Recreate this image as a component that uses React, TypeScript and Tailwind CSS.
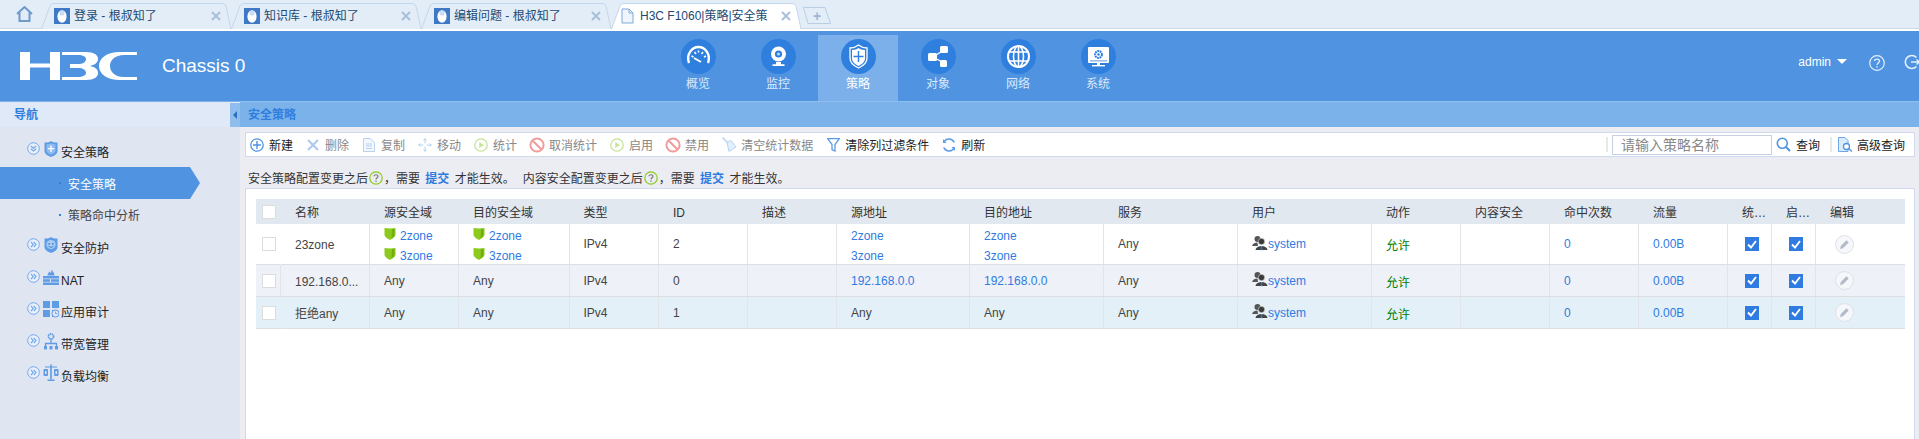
import React from 'react';

const FONT = "font-['Liberation_Sans','Noto_Sans_CJK_SC',sans-serif]";

const Egg = () => (
  <svg width="16" height="16" viewBox="0 0 16 16" className="shrink-0 relative">
    <rect width="16" height="16" fill="#3f78c4" />
    <ellipse cx="8" cy="8.5" rx="4.6" ry="6.2" fill="#ffffff" />
    <ellipse cx="8" cy="5" rx="2.6" ry="2.6" fill="#c9dcf3" />
  </svg>
);

const TabShape = ({ active }: { active?: boolean }) => (
  <svg className="absolute inset-0 w-full h-full" viewBox="0 0 190 26" preserveAspectRatio="none">
    <path
      d="M0.5 26 L9 3 Q10 0.5 13 0.5 H181 Q184 0.5 185 3 L190 26"
      fill={active ? '#ffffff' : '#e3edf8'}
      stroke="#c4d6ea"
      strokeWidth="1"
    />
  </svg>
);

const Tab = ({ title, active }: { title: string; active?: boolean }) => (
  <div className="relative w-[190px] h-[26px] flex items-center pl-[13px] pr-[10px] shrink-0">
    <TabShape active={active} />
    {active ? (
      <svg width="13" height="16" viewBox="0 0 13 16" className="shrink-0 relative -ml-[3px]">
        <path d="M1 1H8L12 5V15H1Z" fill="#eef5fc" stroke="#7fa9d8" />
        <path d="M8 1V5H12" fill="none" stroke="#7fa9d8" />
      </svg>
    ) : (
      <Egg />
    )}
    <span className={`relative text-[12px] leading-[16px] whitespace-nowrap text-[#1c4a72] ${active ? 'ml-[6px]' : 'ml-[4px]'}`}>
      {title}
    </span>
    <svg width="10" height="10" viewBox="0 0 10 10" className="relative ml-auto shrink-0">
      <path d="M1 1L9 9M9 1L1 9" stroke="#a9c0dc" strokeWidth="2" />
    </svg>
  </div>
);

const Logo = () => (
  <svg width="117" height="28" viewBox="0 0 117 28" className="shrink-0">
    <path fill="#fff" d="M0 0H10V11.5H30V0H40V28H30V15.5H10V28H0Z" />
    <path fill="#fff" d="M42 0H66C74 0 78 3 78 7C78 11 74 13 70 14C75 15 78 17 78 21C78 25 74 28 66 28H42V25H58C63 25 66 23 66 21C66 18 63 16 58 16H50V12H58C63 12 66 10 66 7C66 5 63 3 58 3H42Z" />
    <path fill="#fff" d="M117 0V3H104C95 3 90 8 90 14C90 20 95 25 104 25H117V28H100C87 28 79 22 79 14C79 6 87 0 100 0Z" />
  </svg>
);

const NavGauge = () => (
  <g fill="none" stroke="#fff">
    <path d="M8 24C5 15 11 8 17.5 8C24 8 30 15 27 24" strokeWidth="2.4" />
    <path d="M10.5 17l2 1M13.5 13l1.5 2M17.5 11.5v2M22 13l-1.5 2M25 17l-2 1" strokeWidth="1.5" />
    <path d="M13 19L20 23" strokeWidth="2" />
  </g>
);
const NavCam = () => (
  <g>
    <circle cx="17.5" cy="15" r="7.5" fill="#fff" />
    <circle cx="17.5" cy="15" r="3.6" fill="#2f7fdf" />
    <circle cx="17.5" cy="15" r="1.5" fill="#bcd8f7" />
    <path d="M15 23h5v2.2h3.5V27h-12v-1.8H15z" fill="#fff" />
  </g>
);
const NavShield = () => (
  <g fill="none" stroke="#fff">
    <path d="M9 9C13 9 15 8 17.5 6C20 8 22 9 26 9V19C26 24 22 27 17.5 29C13 27 9 24 9 19Z" strokeWidth="1.3" />
    <path d="M11 11C14 11 16 10 17.5 9C19 10 21 11 24 11V19C24 23 21 25 17.5 27C14 25 11 23 11 19Z" fill="#fff" stroke="none" />
    <path d="M17.5 12V23M12.5 17.5H22.5" stroke="#2f7fdf" strokeWidth="1.4" />
  </g>
);
const NavShare = () => (
  <g>
    <path d="M12 18L23 11M12 18L23 24" stroke="#fff" strokeWidth="1.4" fill="none" />
    <rect x="7" y="14" width="9" height="8" rx="1.5" fill="#fff" />
    <rect x="19" y="7" width="8" height="7" rx="1.5" fill="#fff" />
    <rect x="19" y="21" width="7" height="7" rx="1.5" fill="#fff" />
  </g>
);
const NavGlobe = () => (
  <g fill="none" stroke="#fff" strokeWidth="1.6">
    <circle cx="17.5" cy="17.5" r="10.5" strokeWidth="2" />
    <ellipse cx="17.5" cy="17.5" rx="5" ry="10.5" />
    <path d="M17.5 7V28M8 13H27M8 22H27" />
  </g>
);
const NavMonitor = () => (
  <g>
    <rect x="7" y="8" width="21" height="16" rx="1" fill="#fff" />
    <circle cx="17.5" cy="15.5" r="3.4" fill="none" stroke="#2f7fdf" strokeWidth="2" strokeDasharray="1.8 0.6" />
    <circle cx="17.5" cy="15.5" r="1.2" fill="#2f7fdf" />
    <rect x="9" y="21.5" width="17" height="0.8" fill="#2f7fdf" />
    <rect x="16" y="24" width="3" height="2" fill="#fff" />
    <rect x="11" y="26" width="13" height="1.4" fill="#fff" />
  </g>
);

const NAV = [
  { label: '概览', icon: <NavGauge /> },
  { label: '监控', icon: <NavCam /> },
  { label: '策略', icon: <NavShield />, active: true },
  { label: '对象', icon: <NavShare /> },
  { label: '网络', icon: <NavGlobe /> },
  { label: '系统', icon: <NavMonitor /> },
];

const Fold = ({ open }: { open?: boolean }) => (
  <svg width="13" height="13" viewBox="0 0 13 13" className="shrink-0 -mt-[6px]">
    <circle cx="6.5" cy="6.5" r="5.8" fill="#eaf0fa" stroke="#73a8e8" />
    <path
      d={open ? 'M3.8 4L6.5 6.2L9.2 4M3.8 6.8L6.5 9L9.2 6.8' : 'M4 3.8L6.2 6.5L4 9.2M6.8 3.8L9 6.5L6.8 9.2'}
      fill="none"
      stroke="#73a8e8"
      strokeWidth="1.2"
    />
  </svg>
);

const S = '#5f9ce6';
const IShieldPlus = () => (
  <g>
    <path d="M1.5 2.5C5 2.5 6.5 2 8 1C9.5 2 11 2.5 14.5 2.5V11C14.5 14 11 16 8 17C5 16 1.5 14 1.5 11Z" fill={S} />
    <path d="M3.5 4.2C5.5 4.2 7 3.8 8 3.2C9 3.8 10.5 4.2 12.5 4.2V10.5C12.5 12.5 10 14 8 14.8C6 14 3.5 12.5 3.5 10.5Z" fill="#8fbcf0" />
    <path d="M8 5.5V12M4.8 8.7H11.2" stroke="#fff" strokeWidth="1.3" />
  </g>
);
const IShieldFace = () => (
  <g>
    <path d="M1.5 2.5C5 2.5 6.5 2 8 1C9.5 2 11 2.5 14.5 2.5V11C14.5 14 11 16 8 17C5 16 1.5 14 1.5 11Z" fill={S} />
    <circle cx="8" cy="8.5" r="4.6" fill="#a9ccf3" />
    <circle cx="6.2" cy="7.8" r="0.9" fill="#3f7fd0" />
    <circle cx="9.8" cy="7.8" r="0.9" fill="#3f7fd0" />
    <path d="M5.5 10.2C6.5 11.5 9.5 11.5 10.5 10.2" stroke="#3f7fd0" fill="none" />
  </g>
);
const IWall = () => (
  <g fill={S}>
    <path d="M8.5 1C9 3 11.5 4.5 11.5 7.5H4.5C4.5 5.5 6 5 6 3.5C7 4 7.5 4.5 7.5 5C8.3 4 8.8 2.5 8.5 1Z" />
    <path d="M0 8H16V10.5H0ZM0 11.3H7V13.8H0ZM8 11.3H16V13.8H8ZM0 14.6H16V17H0Z" />
  </g>
);
const IGrid = () => (
  <g>
    <rect x="0" y="1" width="7" height="7" fill={S} />
    <rect x="9" y="1" width="7" height="7" fill={S} />
    <rect x="0" y="10" width="7" height="7" fill={S} />
    <rect x="9" y="10" width="3" height="7" fill={S} />
    <circle cx="12.5" cy="13.5" r="3.6" fill="#dfe5f1" stroke={S} />
    <path d="M12.5 11.5V13.5H14.5" stroke={S} fill="none" strokeWidth="0.8" />
  </g>
);
const IOrg = () => (
  <g fill="none" stroke={S}>
    <circle cx="8" cy="4.5" r="2.6" strokeWidth="1.6" strokeDasharray="1.6 0.5" />
    <path d="M8 7.5V12M2.5 15V11.5H13.5V15" strokeWidth="1.3" />
    <rect x="1" y="14" width="3" height="3.4" fill={S} stroke="none" />
    <rect x="6.5" y="14" width="3" height="3.4" fill={S} stroke="none" />
    <rect x="12" y="14" width="3" height="3.4" fill={S} stroke="none" />
  </g>
);
const IScale = () => (
  <g>
    <rect x="7.2" y="0.5" width="1.6" height="15" fill={S} />
    <rect x="4.5" y="15.5" width="7" height="1.5" fill={S} />
    <rect x="2" y="2.5" width="12" height="1" fill={S} />
    <rect x="0.5" y="5" width="4.5" height="7" rx="1" fill={S} />
    <rect x="11" y="5" width="4.5" height="7" rx="1" fill={S} />
    <rect x="2" y="7" width="1.5" height="3" fill="#dfe5f1" />
    <rect x="12.5" y="7" width="1.5" height="3" fill="#dfe5f1" />
  </g>
);

const MenuRow = ({ icon, label, open }: { icon: React.ReactNode; label: string; open?: boolean }) => (
  <div className="h-[32px] flex items-center pl-[27px]">
    <Fold open={open} />
    <svg width="16" height="18" viewBox="0 0 16 18" className="shrink-0 ml-[3px] -mt-[4px]">{icon}</svg>
    <span className="ml-[2px] mt-[3px] text-[12px] leading-[16px] text-[#222]">{label}</span>
  </div>
);

const TB_IC = 'shrink-0';
const ToolPlus = () => (
  <svg width="14" height="14" viewBox="0 0 14 14" className={TB_IC}>
    <circle cx="7" cy="7" r="6.2" fill="none" stroke="#4f93e1" strokeWidth="1.3" />
    <path d="M7 3V11M3 7H11" stroke="#4f93e1" strokeWidth="1.4" />
  </svg>
);
const ToolX = () => (
  <svg width="12" height="12" viewBox="0 0 12 12" className={TB_IC}>
    <path d="M1 1L11 11M11 1L1 11" stroke="#aecbef" strokeWidth="2.2" />
  </svg>
);
const ToolDoc = () => (
  <svg width="12" height="14" viewBox="0 0 12 14" className={TB_IC}>
    <path d="M0.5 0.5H7L11.5 4.5V13.5H0.5Z" fill="#f3f8fe" stroke="#b7d2f1" />
    <path d="M3 6H9M3 8H9M3 10.5H9" stroke="#b7d2f1" strokeWidth="1.2" />
  </svg>
);
const ToolMove = () => (
  <svg width="14" height="14" viewBox="0 0 14 14" className={TB_IC}>
    <path d="M7 0L9 2.5H5ZM7 14L5 11.5H9ZM0 7L2.5 5V9ZM14 7L11.5 9V5Z" fill="#b7d2f1" />
    <path d="M7 3V5.5M7 8.5V11M3 7H5.5M8.5 7H11" stroke="#b7d2f1" />
  </svg>
);
const ToolPlay = () => (
  <svg width="14" height="14" viewBox="0 0 14 14" className={TB_IC}>
    <circle cx="7" cy="7" r="6.2" fill="none" stroke="#c6e395" strokeWidth="1.3" />
    <path d="M5.3 4L10 7L5.3 10Z" fill="#c6e395" />
  </svg>
);
const ToolBan = () => (
  <svg width="16" height="16" viewBox="0 0 16 16" className={TB_IC}>
    <circle cx="8" cy="8" r="6.6" fill="none" stroke="#f09c9c" strokeWidth="2" />
    <path d="M3.5 3.5L12.5 12.5" stroke="#f09c9c" strokeWidth="2" />
  </svg>
);
const ToolBroom = () => (
  <svg width="15" height="15" viewBox="0 0 15 15" className={TB_IC}>
    <path d="M0.5 0.5L6 6" stroke="#b7d2f1" strokeWidth="1.5" />
    <path d="M5 5.5L9 3.5L14 10L7 14.5Z" fill="#e3effb" stroke="#b7d2f1" />
  </svg>
);
const ToolFilter = () => (
  <svg width="13" height="14" viewBox="0 0 13 14" className={TB_IC}>
    <path d="M0.7 0.7H12.3L8 6.5V13L5 11.5V6.5Z" fill="none" stroke="#5b9ae6" strokeWidth="1.3" />
  </svg>
);
const ToolRefresh = () => (
  <svg width="14" height="14" viewBox="0 0 14 14" className={TB_IC}>
    <path d="M12.2 4.5A5.8 5.8 0 0 0 2.5 3M1.8 9.5A5.8 5.8 0 0 0 11.5 11" fill="none" stroke="#5b9ae6" strokeWidth="1.6" />
    <path d="M1 1V5H4.5ZM13 13V9H9.5Z" fill="#5b9ae6" />
  </svg>
);
const ToolSearch = () => (
  <svg width="15" height="15" viewBox="0 0 15 15" className={TB_IC}>
    <circle cx="6.3" cy="6.3" r="5" fill="none" stroke="#4f93e1" strokeWidth="1.6" />
    <path d="M10 10L14 14" stroke="#4f93e1" strokeWidth="2" />
  </svg>
);
const ToolAdv = () => (
  <svg width="15" height="15" viewBox="0 0 15 15" className={TB_IC}>
    <path d="M0.5 0.5H7L10 3.5V14.5H0.5Z" fill="#dcebfb" stroke="#6fa6e8" />
    <circle cx="8.5" cy="9.5" r="3" fill="#fff" stroke="#4f93e1" strokeWidth="1.3" />
    <path d="M10.8 11.8L14 14.5" stroke="#4f93e1" strokeWidth="1.4" />
  </svg>
);

const TOOLS = [
  { label: '新建', icon: <ToolPlus />, on: true },
  { label: '删除', icon: <ToolX /> },
  { label: '复制', icon: <ToolDoc /> },
  { label: '移动', icon: <ToolMove /> },
  { label: '统计', icon: <ToolPlay /> },
  { label: '取消统计', icon: <ToolBan /> },
  { label: '启用', icon: <ToolPlay /> },
  { label: '禁用', icon: <ToolBan /> },
  { label: '清空统计数据', icon: <ToolBroom /> },
  { label: '清除列过滤条件', icon: <ToolFilter />, on: true },
  { label: '刷新', icon: <ToolRefresh />, on: true },
];

const Help = () => (
  <svg width="14" height="14" viewBox="0 0 14 14" className="inline-block shrink-0 mx-[1px]">
    <circle cx="7" cy="7" r="6.2" fill="none" stroke="#8ccb1e" strokeWidth="1.2" />
    <path d="M5 5.3C5 3.2 9 3.2 9 5.3C9 6.8 7 6.8 7 8.5" fill="none" stroke="#7a7a7a" strokeWidth="1.2" />
    <rect x="6.4" y="9.6" width="1.2" height="1.3" fill="#7a7a7a" />
  </svg>
);

const Zone = ({ name }: { name: string }) => (
  <div className="h-[20px] flex items-center">
    <svg width="12" height="13" viewBox="0 0 12 13" className="shrink-0 -mt-[6px]">
      <path d="M0.5 1C4 1.5 8 1.5 11.5 1V7.5C11.5 10 8 12 6 13C4 12 0.5 10 0.5 7.5Z" fill="#8ccb1e" />
      <path d="M8 2H10.5V7.5C10.5 9 9 10.5 7.5 11.3Z" fill="#72ad12" />
    </svg>
    <span className="ml-[4px] text-[#2f7be0]">{name}</span>
  </div>
);

const Users = () => (
  <svg width="16" height="16" viewBox="0 0 16 16" className="shrink-0 mb-[3px]">
    <circle cx="5.5" cy="4" r="3" fill="#555" />
    <path d="M0 11C1 8 3 7.5 5.5 7.5L6 11Z" fill="#555" />
    <circle cx="9.5" cy="6.5" r="3.2" fill="#3a3a3a" stroke="#fff" strokeWidth="0.5" />
    <path d="M3.5 15C4 12 7 11 9.5 11C12 11 15 12 15.5 15Z" fill="#444" />
    <path d="M9.5 11V16" stroke="#4f93e1" strokeWidth="1.6" strokeDasharray="1.4 1" />
  </svg>
);

const Check = () => <div className="w-[14px] h-[14px] bg-white border border-[#dcdcdc]" />;

const Checked = () => (
  <div className="w-[14px] h-[14px] bg-[#2f7be0] flex items-center justify-center">
    <svg width="10" height="9" viewBox="0 0 10 9">
      <path d="M1 4.5L4 7.5L9 1" fill="none" stroke="#fff" strokeWidth="1.9" />
    </svg>
  </div>
);

const Edit = () => (
  <div className="w-[19px] h-[19px] rounded-full bg-[#f6f7fa] border border-[#dfe1e8] flex items-center justify-center ml-[5px]">
    <svg width="11" height="11" viewBox="0 0 11 11">
      <path d="M1 10L1.8 7L7.5 1.3L9.7 3.5L4 9.2Z" fill="#b4b9c9" />
    </svg>
  </div>
);

const COLS = [
  'w-[24px]', 'w-[89px]', 'w-[89px]', 'w-[110.5px]', 'w-[89.5px]', 'w-[89px]', 'w-[89px]', 'w-[133px]', 'w-[134px]',
  'w-[134px]', 'w-[134px]', 'w-[89px]', 'w-[89px]', 'w-[89px]', 'w-[89px]', 'w-[44px]', 'w-[44px]', 'w-[90px]',
];
const HEAD = ['名称', '源安全域', '目的安全域', '类型', 'ID', '描述', '源地址', '目的地址', '服务', '用户', '动作', '内容安全', '命中次数', '流量', '统…', '启…', '编辑'];

const Link = ({ children }: { children: React.ReactNode }) => <span className="text-[#2f7be0]">{children}</span>;

const Two = ({ children }: { children: React.ReactNode }) => <div className="mt-[2px] -mb-[2px]">{children}</div>;

const ROWS = [
  {
    bg: 'bg-white',
    h: 'h-[41px]',
    name: '23zone',
    src: <Two><Zone name="2zone" /><Zone name="3zone" /></Two>,
    dst: <Two><Zone name="2zone" /><Zone name="3zone" /></Two>,
    id: '2',
    sa: <Two><div className="h-[20px] leading-[20px]"><Link>2zone</Link></div><div className="h-[20px] leading-[20px]"><Link>3zone</Link></div></Two>,
    da: <Two><div className="h-[20px] leading-[20px]"><Link>2zone</Link></div><div className="h-[20px] leading-[20px]"><Link>3zone</Link></div></Two>,
    sep: 'border-l-transparent',
  },
  {
    bg: 'bg-[#eef1f8]',
    h: 'h-[32px]',
    name: '192.168.0...',
    src: 'Any',
    dst: 'Any',
    id: '0',
    sa: <Link>192.168.0.0</Link>,
    da: <Link>192.168.0.0</Link>,
    sep: 'border-l-[#e2e4e8]',
  },
  {
    bg: 'bg-[#e3f0f8]',
    h: 'h-[32px]',
    name: '拒绝any',
    src: 'Any',
    dst: 'Any',
    id: '1',
    sa: 'Any',
    da: 'Any',
    sep: 'border-l-transparent',
  },
];

const Cell = ({ children }: { children?: React.ReactNode }) => (
  <td className="pl-[14px] pr-0 whitespace-nowrap text-[#444] align-middle border-l border-l-[#e2e4e8] border-b border-b-[#dcdee2]">{children}</td>
);

export default function App() {
  return (
    <div className={`${FONT} h-[439px] w-[1919px] overflow-hidden flex flex-col text-[12px] leading-[16px] bg-white`}>
      {/* browser tabs */}
      <div className="h-[29px] shrink-0 bg-[#e3edf8] border-b border-[#c9d9ea] flex items-start">
        <div className="w-[41px] h-full flex items-center justify-center pl-[7px] shrink-0 pb-[1px]">
          <svg width="17" height="16" viewBox="0 0 17 16">
            <path d="M1 8L8.5 1L16 8M3.5 6.5V15H13.5V6.5" fill="none" stroke="#6d9ac9" strokeWidth="2" />
          </svg>
        </div>
        <div className="flex mt-[3px]">
          <Tab title="登录 - 根叔知了" />
          <Tab title="知识库 - 根叔知了" />
          <Tab title="编辑问题 - 根叔知了" />
          <Tab title="H3C F1060|策略|安全策" active />
        </div>
        <div className="relative ml-[2px] mt-[7px] w-[28px] h-[17px] flex items-center justify-center">
          <svg className="absolute inset-0" width="28" height="17" viewBox="0 0 28 17">
            <path d="M0.5 0.5H22L27.5 16.5H5Z" fill="#e3edf8" stroke="#b9cde4" />
          </svg>
          <span className="relative text-[14px] font-bold text-[#9db6d3] leading-[16px]">+</span>
        </div>
      </div>
      <div className="h-[2px] shrink-0 bg-white" />

      {/* header */}
      <div className="h-[70px] shrink-0 bg-[#4f93e1] flex items-start relative">
        <div className="ml-[20px] mt-[21px]"><Logo /></div>
        <div className="ml-[25px] mt-[21px] w-[496px] text-[19px] leading-[28px] text-white">Chassis 0</div>
        <div className="flex mt-[4px]">
          {NAV.map(n => (
            <div key={n.label} className={`w-[80px] h-[66px] flex flex-col items-center pt-[4px] ${n.active ? 'bg-[#7bb0ea]' : ''}`}>
              <svg width="35" height="35" viewBox="0 0 35 35">
                <circle cx="17.5" cy="17.5" r="17.5" fill="#2f7fdf" />
                {n.icon}
              </svg>
              <span className={`mt-[2px] leading-[16px] ${n.active ? 'text-white' : 'text-[#dbe9fa]'}`}>{n.label}</span>
            </div>
          ))}
        </div>
        <div className="ml-auto mt-[21px] flex items-center pr-0 -mr-[1px]">
          <span className="text-white leading-[16px]">admin</span>
          <svg width="10" height="5" viewBox="0 0 10 5" className="ml-[6px]">
            <path d="M0 0H10L5 5Z" fill="#fff" />
          </svg>
          <svg width="16" height="16" viewBox="0 0 16 16" className="ml-[22px] mt-[3px]">
            <circle cx="8" cy="8" r="7.3" fill="none" stroke="#e6f0fc" strokeWidth="1.2" />
            <path d="M5.5 6C5.5 3.5 10.5 3.5 10.5 6C10.5 8 8 8 8 10" fill="none" stroke="#e6f0fc" strokeWidth="1.3" />
            <rect x="7.3" y="11.2" width="1.4" height="1.4" fill="#e6f0fc" />
          </svg>
          <svg width="16" height="16" viewBox="0 0 16 16" className="ml-[19px] mt-[1px]">
            <path d="M12.5 3.5A6.5 6.5 0 1 0 12.5 12.5" fill="none" stroke="#e6f0fc" strokeWidth="1.6" />
            <path d="M7 8H15M12.5 5.5L15.5 8L12.5 10.5" fill="none" stroke="#e6f0fc" strokeWidth="1.4" />
          </svg>
        </div>
      </div>

      <div className="flex-1 min-h-0 flex">
        {/* sidebar */}
        <div className="w-[240px] shrink-0 bg-[#dfe5f1] flex flex-col">
          <div className="h-[26px] shrink-0 bg-[#dfe9f8] flex items-center justify-between border-t border-[#7bb0ea]">
            <span className="pl-[14px] font-bold text-[#2f7fdf]">导航</span>
            <div className="w-[10px] h-[24px] bg-[#8fbdee] flex items-center justify-center">
              <svg width="4" height="8" viewBox="0 0 4 8"><path d="M4 0V8L0 4Z" fill="#2f6fc0" /></svg>
            </div>
          </div>
          <div className="pt-[8px]">
            <MenuRow open icon={<IShieldPlus />} label="安全策略" />
            <div className="relative h-[32px] w-[200px] flex items-center pl-[59px] bg-[#4f93e1] [clip-path:polygon(0_0,190px_0,200px_50%,190px_100%,0_100%)]">
              <span className="w-[2px] h-[2px] bg-[#2f7fdf]" />
              <span className="ml-[7px] mt-[3px] text-white">安全策略</span>
            </div>
            <div className="h-[32px] flex items-center pl-[59px]">
              <span className="w-[2px] h-[2px] bg-[#2f7fdf]" />
              <span className="ml-[7px] mt-[2px] text-[#444]">策略命中分析</span>
            </div>
            <MenuRow icon={<IShieldFace />} label="安全防护" />
            <MenuRow icon={<IWall />} label="NAT" />
            <MenuRow icon={<IGrid />} label="应用审计" />
            <MenuRow icon={<IOrg />} label="带宽管理" />
            <MenuRow icon={<IScale />} label="负载均衡" />
          </div>
        </div>

        {/* main */}
        <div className="flex-1 min-w-0 flex flex-col bg-[#ecedf3]">
          <div className="h-[26px] shrink-0 bg-[#7bb2ea] border-t border-[#8fbdee] flex items-center pl-[8px] font-bold text-[#2f7fdf]">安全策略</div>
          <div className="flex-1 min-h-0 flex flex-col pt-[5px] pl-[5px] pr-[4px]">
            <div className="h-[25px] shrink-0 bg-white border border-[#d0d9ee] flex items-center pl-[4px] pr-[9px]">
              <div className="flex items-center gap-[13px]">
                {TOOLS.map(t => (
                  <div key={t.label} className="flex items-center gap-[5px]">
                    <div className="w-[14px] flex justify-center">{t.icon}</div>
                    <span className={`pt-[2px] ${t.on ? 'text-[#222]' : 'text-[#888]'}`}>{t.label}</span>
                  </div>
                ))}
              </div>
              <div className="ml-auto flex items-center">
                <div className="w-[2px] h-[15px] bg-[#e8e8e8]" />
                <div className="ml-[4px] w-[160px] h-[20px] border border-[#c5d1e3] pl-[8px] text-[14px] leading-[18px] text-[#888]">请输入策略名称</div>
                <div className="ml-[4px]"><ToolSearch /></div>
                <span className="ml-[5px] pt-[2px] text-[#222]">查询</span>
                <div className="ml-[10px] w-[2px] h-[15px] bg-[#e8e8e8]" />
                <div className="ml-[6px]"><ToolAdv /></div>
                <span className="ml-[4px] pt-[2px] text-[#222]">高级查询</span>
              </div>
            </div>
            <div className="h-[31px] shrink-0 pt-[14px] pl-[3px] flex items-start text-[#333]">
              <span>安全策略配置变更之后</span>
              <Help />
              <span>，需要&nbsp;</span>
              <span className="font-bold text-[#2f7be0] mx-[2px]">提交</span>
              <span>&nbsp;才能生效。</span>
              <span className="ml-[8px]">内容安全配置变更之后</span>
              <Help />
              <span>，需要&nbsp;</span>
              <span className="font-bold text-[#2f7be0] mx-[2px]">提交</span>
              <span>&nbsp;才能生效。</span>
            </div>
            <div className="flex-1 min-h-0 bg-white border border-[#d0d9ee] border-b-0 pt-[10px] pl-[10px]">
              <table className="table-fixed border-separate border-spacing-0 w-[1649px]">
                <colgroup>
                  {COLS.map((c, i) => <col key={i} className={c} />)}
                </colgroup>
                <thead>
                  <tr className="h-[25px] bg-[#e2e8ef] text-[#333]">
                    <th className="pl-[6px] font-normal"><Check /></th>
                    {HEAD.map(h => (
                      <th key={h} className="pl-[15px] pt-[2px] pr-0 font-normal text-left whitespace-nowrap overflow-hidden">{h}</th>
                    ))}
                  </tr>
                </thead>
                <tbody>
                  {ROWS.map(r => (
                    <tr key={r.name} className={`${r.h} ${r.bg}`}>
                      <td className="pl-[6px] border-b border-b-[#dcdee2]"><Check /></td>
                      <td className={`pl-[14px] pt-[2px] whitespace-nowrap text-[#444] border-l border-b border-b-[#dcdee2] ${r.sep}`}>{r.name}</td>
                      <Cell>{r.src}</Cell>
                      <Cell>{r.dst}</Cell>
                      <Cell>IPv4</Cell>
                      <Cell>{r.id}</Cell>
                      <Cell />
                      <Cell>{r.sa}</Cell>
                      <Cell>{r.da}</Cell>
                      <Cell>Any</Cell>
                      <Cell>
                        <div className="flex items-center">
                          <Users />
                          <span className="text-[#2f7be0]">system</span>
                        </div>
                      </Cell>
                      <Cell><span className="block pt-[4px] text-[#008000]">允许</span></Cell>
                      <Cell />
                      <Cell><Link>0</Link></Cell>
                      <Cell><Link>0.00B</Link></Cell>
                      <Cell><div className="pl-[3px]"><Checked /></div></Cell>
                      <Cell><div className="pl-[3px]"><Checked /></div></Cell>
                      <Cell><Edit /></Cell>
                    </tr>
                  ))}
                </tbody>
              </table>
            </div>
          </div>
        </div>
      </div>
    </div>
  );
}
